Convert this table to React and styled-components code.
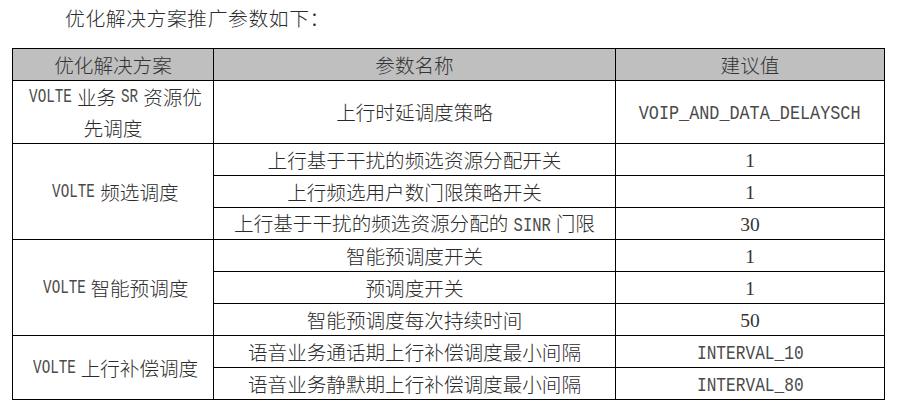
import React from 'react';
import styled, { createGlobalStyle } from 'styled-components';

const GlobalStyle = createGlobalStyle`
  html, body {
    margin: 0;
    padding: 0;
    background: #fff;
  }
  body {
    font-family: "Noto Sans CJK SC", "Liberation Serif", serif;
    font-weight: 300;
    color: #2b2b2b;
  }
`;

const ROWS = [
  {
    group: ['VOLTE 业务 SR 资源优', '先调度'],
    items: [{ name: '上行时延调度策略', value: 'VOIP_AND_DATA_DELAYSCH', mono: true, tall: true }],
  },
  {
    group: ['VOLTE 频选调度'],
    items: [
      { name: '上行基于干扰的频选资源分配开关', value: '1' },
      { name: '上行频选用户数门限策略开关', value: '1' },
      { name: '上行基于干扰的频选资源分配的 SINR 门限', value: '30' },
    ],
  },
  {
    group: ['VOLTE 智能预调度'],
    items: [
      { name: '智能预调度开关', value: '1' },
      { name: '预调度开关', value: '1' },
      { name: '智能预调度每次持续时间', value: '50' },
    ],
  },
  {
    group: ['VOLTE 上行补偿调度'],
    items: [
      { name: '语音业务通话期上行补偿调度最小间隔', value: 'INTERVAL_10', mono: true },
      { name: '语音业务静默期上行补偿调度最小间隔', value: 'INTERVAL_80', mono: true },
    ],
  },
];

// latin runs use a narrow, tall monospace face like the original document
const Mono = ({ text, scale = 0.78, gap = 0 }) => (
  <Latin $n={text.length} $scale={scale} $gap={gap}>
    {text}
  </Latin>
);

const renderMixed = (text, scale) =>
  text
    .split(/\s*([A-Za-z_]+)\s*/)
    .filter(Boolean)
    .map((part, i) =>
      /^[A-Za-z_]+$/.test(part) ? <Mono key={i} text={part} scale={scale} gap={5} /> : part
    );

const App = () => (
  <>
    <GlobalStyle />
    <Page>
      <Title>优化解决方案推广参数如下：</Title>
      <Table>
        <colgroup>
          <col style={{ width: 201 }} />
          <col style={{ width: 402 }} />
          <col style={{ width: 269 }} />
        </colgroup>
        <thead>
          <tr>
            <HeadCell>优化解决方案</HeadCell>
            <HeadCell>参数名称</HeadCell>
            <HeadCell>建议值</HeadCell>
          </tr>
        </thead>
        <tbody>
          {ROWS.map((row, r) =>
            row.items.map((item, i) => (
              <Row key={`${r}-${i}`} $tall={item.tall}>
                {i === 0 && (
                  <Cell rowSpan={row.items.length}>
                    {row.group.map((line, k) => (
                      <GroupLine key={k}>{renderMixed(line, 0.68)}</GroupLine>
                    ))}
                  </Cell>
                )}
                <Cell>{renderMixed(item.name, 0.74)}</Cell>
                <Cell>
                  {item.mono ? (
                    <Mono text={item.value} scale={item.tall ? 0.8 : 0.77} />
                  ) : (
                    <Num>{item.value}</Num>
                  )}
                </Cell>
              </Row>
            ))
          )}
        </tbody>
      </Table>
    </Page>
  </>
);

const Page = styled.div`
  width: 902px;
  height: 413px;
  padding: 0 0 0 12px;
  box-sizing: border-box;
  overflow: hidden;
`;

const Title = styled.div`
  height: 48px;
  padding: 3px 0 0 53px;
  box-sizing: border-box;
  font-size: 19.8px;
  line-height: 30px;
  letter-spacing: 0.6px;
`;

const Table = styled.table`
  border-collapse: collapse;
  table-layout: fixed;
  width: 872px;
`;

const HeadCell = styled.th`
  height: 31px;
  padding: 0;
  background: #bfbfbf;
  border: 1.3px solid #000;
  font-weight: 300;
  font-size: 19.6px;
  line-height: 22px;
  text-align: center;
  color: #333;
`;

const Row = styled.tr`
  height: ${({ $tall }) => ($tall ? '63px' : '32px')};
`;

const Cell = styled.td`
  padding: 0;
  border: 1.3px solid #000;
  font-size: 19.6px;
  line-height: 22px;
  text-align: center;
  vertical-align: middle;
  white-space: nowrap;
`;

const GroupLine = styled.div`
  height: 31px;
  display: flex;
  align-items: center;
  justify-content: center;
`;

const SIZE = 21;

const Latin = styled.span`
  display: inline-block;
  font-family: "Liberation Mono", monospace;
  font-weight: 400;
  font-size: ${SIZE}px;
  line-height: 20px;
  color: #4a4a4a;
  transform: scaleX(${({ $scale }) => $scale});
  transform-origin: center;
  margin: 0
    ${({ $n, $scale, $gap }) => -((1 - $scale) * $n * 0.6 * SIZE) / 2 + $gap}px;
`;

const Num = styled.span`
  font-family: "Liberation Serif", serif;
  font-weight: 400;
  font-size: 19.5px;
  color: #333;
`;

export default App;
